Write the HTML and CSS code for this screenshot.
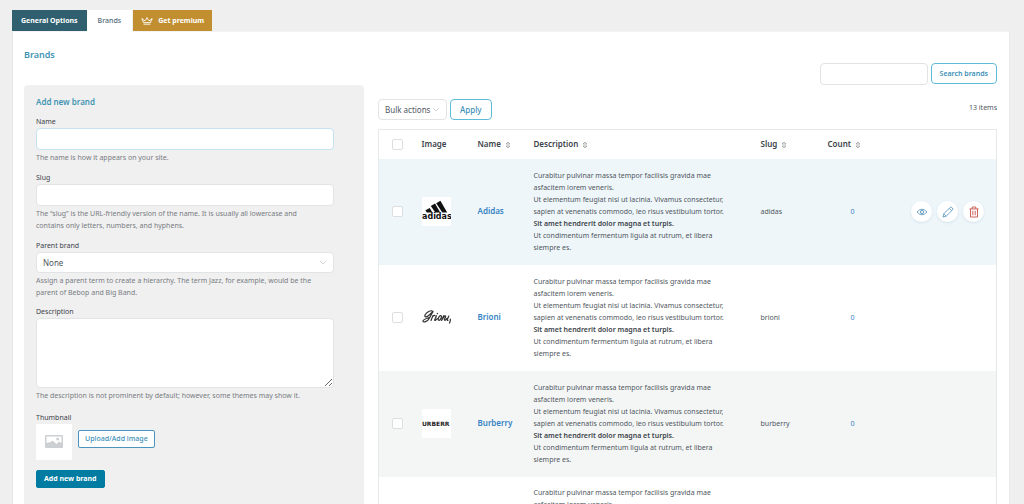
FILE: index.html
```html
<!DOCTYPE html>
<html lang="en">
<head>
<meta charset="utf-8">
<title>Brands</title>
<link rel="stylesheet" href="styles.css">
</head>
<body>
<svg class="sprite" aria-hidden="true">
  <symbol id="sort" viewBox="0 0 6 8"><path d="M1 3 3 1 5 3zM1 5 3 7 5 5z" fill="none" stroke="currentColor" stroke-width=".7"/></symbol>
</svg>
<nav class="tabs">
  <a class="tab tab-general" href="#general">General Options</a>
  <a class="tab tab-active" href="#brands">Brands</a>
  <a class="tab tab-premium" href="#premium">
    <svg class="crown" viewBox="0 0 12 8"><path d="M2.500 7.200h7M2.500 5.600 1.300 2.200 4 3.800 6 1.200l2 2.600 2.700-1.600-1.200 3.400z" fill="none" stroke="currentColor" stroke-width=".9" stroke-linejoin="round"/><circle cx="1.100" cy="1.900" r=".7" fill="currentColor"/><circle cx="10.900" cy="1.900" r=".7" fill="currentColor"/><circle cx="6" cy="1" r=".7" fill="currentColor"/></svg>
    Get premium</a>
</nav>
<main class="panel">
  <h1 class="title">Brands</h1>
  <form class="search">
    <input class="input search-input" type="search" aria-label="Search brands">
    <button class="btn btn-search" type="button">Search brands</button>
  </form>
  <div class="columns">
    <form class="card">
      <h2 class="card-title">Add new brand</h2>
      <div class="field">
        <label for="name">Name</label>
        <input class="input input-focus" id="name" type="text">
        <p class="help">The name is how it appears on your site.</p>
      </div>
      <div class="field">
        <label for="slug">Slug</label>
        <input class="input" id="slug" type="text">
        <p class="help">The “slug” is the URL-friendly version of the name. It is usually all lowercase and contains only letters, numbers, and hyphens.</p>
      </div>
      <div class="field">
        <label for="parent">Parent brand</label>
        <span class="select-wrap"><select class="input select" id="parent"><option>None</option></select><svg class="chevron" viewBox="0 0 8 5"><path d="m1 1 3 3 3-3" fill="none" stroke="currentColor" stroke-width=".8"/></svg></span>
        <p class="help">Assign a parent term to create a hierarchy. The term Jazz, for example, would be the parent of Bebop and Big Band.</p>
      </div>
      <div class="field desc-field">
        <label for="description">Description</label>
        <textarea class="input textarea" id="description"></textarea>
        <p class="help">The description is not prominent by default; however, some themes may show it.</p>
      </div>
      <div class="field thumb-field">
        <label for="upload">Thumbnail</label>
        <div class="thumb-row">
          <span class="thumb"><svg viewBox="0 0 18 14"><rect width="18" height="13" rx="1" fill="#ccd0d3"/><path d="M1.500 1.500h15v6.500L14 6.500 11.500 9 7.500 5.500 5.500 7 1.500 8z" fill="#fff"/><circle cx="12.700" cy="4" r="1.500" fill="#ccd0d3"/></svg></span>
          <button class="btn btn-upload" id="upload" type="button">Upload/Add image</button>
        </div>
      </div>
      <button class="btn btn-primary" type="button">Add new brand</button>
    </form>
    <section class="listing">
      <div class="toolbar">
        <span class="select-wrap"><select class="input select bulk" aria-label="Bulk actions"><option>Bulk actions</option></select><svg class="chevron" viewBox="0 0 8 5"><path d="m1 1 3 3 3-3" fill="none" stroke="currentColor" stroke-width=".8"/></svg></span>
        <button class="btn btn-apply" type="button">Apply</button>
        <span class="count">13 items</span>
      </div>
      <table class="table">
        <colgroup><col class="c-check"><col class="c-img"><col class="c-name"><col class="c-desc"><col class="c-slug"><col class="c-count"><col></colgroup>
        <thead>
          <tr>
            <th class="check"><input type="checkbox" aria-label="Select all"></th>
            <th>Image</th>
            <th>Name <svg class="sort"><use href="#sort"/></svg></th>
            <th>Description <svg class="sort"><use href="#sort"/></svg></th>
            <th>Slug <svg class="sort"><use href="#sort"/></svg></th>
            <th>Count <svg class="sort"><use href="#sort"/></svg></th>
            <th></th>
          </tr>
        </thead>
        <tbody>
          <tr class="hovered">
            <td class="check"><input type="checkbox" aria-label="Select Adidas"></td>
            <td><svg class="logo" viewBox="0 0 29 29"><rect width="29" height="29" fill="#fff"/><g fill="#111"><path d="m3.500 13.300 4.200-2.400 2.700 4.600H4.700z"/><path d="m8.800 9 4.200-2.400 5.200 8.900h-4.900z"/><path d="m14.200 6.200 4.200-2.400 6.800 11.700h-4.900z"/></g><text x="0" y="22" class="logo-adidas">adidas</text></svg></td>
            <td><a class="name" href="#adidas">Adidas</a></td>
            <td class="desc">Curabitur pulvinar massa tempor facilisis gravida mae asfacitem lorem veneris.<br>Ut elementum feugiat nisi ut lacinia. Vivamus consectetur, sapien at venenatis commodo, leo risus vestibulum tortor.<br><strong>Sit amet hendrerit dolor magna et turpis.</strong><br>Ut condimentum fermentum ligula at rutrum, et libera siempre es.</td>
            <td>adidas</td>
            <td class="num"><a href="#c1">0</a></td>
            <td><div class="actions">
              <button class="round" type="button" aria-label="View"><svg viewBox="0 0 12 12"><path d="M1 6q5-5.600 10 0-5 5.600-10 0z" fill="none" stroke="currentColor" stroke-width=".8"/><circle cx="6" cy="6" r="1.600" fill="none" stroke="currentColor" stroke-width=".9"/></svg></button>
              <button class="round" type="button" aria-label="Edit"><svg viewBox="0 0 12 12"><path d="m1 11 .8-3.200 6.300-6.300q.8-.8 1.700 0l.7.7q.8.800 0 1.700l-6.300 6.300zM7.300 2.400l2.300 2.300M1.900 7.800l2.300 2.300" fill="none" stroke="currentColor" stroke-width=".8" stroke-linejoin="round"/></svg></button>
              <button class="round danger" type="button" aria-label="Delete"><svg viewBox="0 0 12 12"><path d="M1.500 2.900h9M4.200 2.700V1h3.600v1.700M2.500 3v8h7V3" fill="none" stroke="currentColor" stroke-width=".9"/><path d="M4.500 4.800v4.500M6 4.800v4.500M7.500 4.800v4.500" stroke="currentColor" stroke-width=".6"/></svg></button>
            </div></td>
          </tr>
          <tr>
            <td class="check"><input type="checkbox" aria-label="Select Brioni"></td>
            <td><svg class="logo" viewBox="0 0 29 29"><rect width="29" height="29" fill="#fff"/><g fill="none" stroke="#333" stroke-linecap="round" stroke-linejoin="round"><path d="M11 9C10 6 4.500 9 3 12c-1 2.500 2 2.200 4 .3L11 8.500 7.500 15C5.500 19 1.200 19.500.9 18.200.7 16.500 4 15.500 7.500 14.500" stroke-width="1.200"/><path d="m11 12.500-2 5M10.300 14q2-2.500 2.700-1.200M14.500 12.700l-1.700 3.800q-.4 1.500.9.700l1.500-1.500M15.300 10.500l.2-.2M19 12.700c-1.800-.5-3.700 3.900-2.300 4.600 1.500.5 3.800-4.100 2.300-4.600M21.700 12.700l-2.200 4.800q3.500-5.600 4.100-4.500.3.600-1.100 3.200-.5 1.700 1.100.7l1.300-1.500M26.800 13l-1.500 3.500q-.3 1.300.7.800M28.300 16q.3 1.800-.8 4" stroke-width="1.200"/></g></svg></td>
            <td><a class="name" href="#brioni">Brioni</a></td>
            <td class="desc">Curabitur pulvinar massa tempor facilisis gravida mae asfacitem lorem veneris.<br>Ut elementum feugiat nisi ut lacinia. Vivamus consectetur, sapien at venenatis commodo, leo risus vestibulum tortor.<br><strong>Sit amet hendrerit dolor magna et turpis.</strong><br>Ut condimentum fermentum ligula at rutrum, et libera siempre es.</td>
            <td>brioni</td>
            <td class="num"><a href="#c2">0</a></td>
            <td></td>
          </tr>
          <tr class="striped">
            <td class="check"><input type="checkbox" aria-label="Select Burberry"></td>
            <td><svg class="logo" viewBox="0 0 29 29"><rect width="29" height="29" fill="#fff"/><text x="0" y="17" class="logo-burberry">URBERR</text></svg></td>
            <td><a class="name" href="#burberry">Burberry</a></td>
            <td class="desc">Curabitur pulvinar massa tempor facilisis gravida mae asfacitem lorem veneris.<br>Ut elementum feugiat nisi ut lacinia. Vivamus consectetur, sapien at venenatis commodo, leo risus vestibulum tortor.<br><strong>Sit amet hendrerit dolor magna et turpis.</strong><br>Ut condimentum fermentum ligula at rutrum, et libera siempre es.</td>
            <td>burberry</td>
            <td class="num"><a href="#c3">0</a></td>
            <td></td>
          </tr>
          <tr class="next">
            <td></td><td></td><td></td>
            <td class="desc">Curabitur pulvinar massa tempor facilisis gravida mae asfacitem lorem veneris.</td>
            <td></td><td></td><td></td>
          </tr>
        </tbody>
      </table>
    </section>
  </div>
</main>
</body>
</html>
```
FILE: styles.css
```css
* { box-sizing: border-box; }
html { height: 100%; overflow: hidden; }
body {
  margin: 0;
  height: 100%;
  overflow: hidden;
  padding: 10px 14px 0 12px;
  background: #efefef;
  color: #50575e;
  font: 7px/12px "Noto Sans", "Open Sans", sans-serif;
}
h1, h2, p { margin: 0; }
a { color: #3582c4; text-decoration: none; }
button, input, select, textarea { font: inherit; color: inherit; margin: 0; }
.sprite { position: absolute; width: 0; height: 0; }

.tabs { display: flex; }
.tab {
  display: flex;
  align-items: center;
  height: 21px;
  padding: 0 9px;
  font-size: 7px;
  font-weight: 700;
  color: #fff;
}
.tab-general { background: #30606f; }
.tab-active { background: #fff; color: #50697a; font-weight: 500; height: 22px; margin-bottom: -1px; padding: 0 11px; }
.tab-premium { background: #c18f30; gap: 5px; padding: 0 8px; margin-left: 1px; }
.crown { width: 12px; height: 8px; }

.panel {
  display: flow-root;
  background: #fff;
  border: 1px solid #e8e8e8;
  border-top-color: #f3f3f3;
  padding: 16px 12px 0 11px;
  min-height: 100%;
}
.title { font-size: 9px; line-height: 14px; font-weight: 600; color: #3f94b3; }
.search { display: flex; justify-content: flex-end; gap: 3px; margin-top: 1px; }
.columns { display: grid; grid-template-columns: 340fr 619fr; gap: 14px; align-items: start; }

.input {
  display: block;
  width: 100%;
  height: 22px;
  padding: 0 6px;
  background: #fff;
  border: 1px solid #e1e3e5;
  border-radius: 4px;
  outline: 0;
  appearance: none;
}
.input-focus { border-color: #c3e3ef; }
.search-input { width: 108px; }
.btn {
  height: 21px;
  padding: 0 8px;
  background: #fff;
  border: 1px solid #5fbcd6;
  border-radius: 4px;
  color: #3a8fb7;
  font-weight: 600;
  white-space: nowrap;
}

.card { background: #f0f0f0; border-radius: 4px 4px 0 0; padding: 10px 30px 30px 12px; min-height: 500px; }
.card-title { font-size: 8px; line-height: 14px; font-weight: 600; color: #3f94b3; margin-bottom: 7px; }
.field { margin-bottom: 8px; }
.field label { display: block; color: #3c434a; }
.help { margin-top: 2px; padding-right: 12px; color: #787c82; }
.select-wrap { position: relative; display: block; }
.select { height: 21px; font-size: 8px; }
.chevron { position: absolute; right: 7px; top: 8px; width: 8px; height: 5px; color: #c5c8cb; pointer-events: none; }
.textarea { height: 70px; resize: vertical; }
.desc-field { margin-top: -1px; margin-bottom: 10px; }
.thumb-field { margin-bottom: 10px; }
.thumb-row { display: flex; gap: 6px; }
.thumb { display: grid; place-items: center; width: 36px; height: 36px; background: #fff; }
.thumb svg { width: 18px; height: 14px; }
.btn-upload { height: 18px; margin-top: 6px; padding: 0 6px; border-color: #4a94bd; border-radius: 2px; font-weight: 500; }
.btn-primary { height: 18px; background: #007ba1; border-color: #007ba1; border-radius: 2px; color: #fff; font-weight: 700; padding: 0 7px; }

.toolbar { display: flex; gap: 3px; margin-top: 14px; margin-bottom: 9px; }
.bulk { width: 69px; }
.toolbar .btn { padding: 0 9px; font-weight: 500; font-size: 8px; }
.count { margin-left: auto; line-height: 18px; }

.table { width: 100%; table-layout: fixed; border-collapse: collapse; border: 1px solid #e6e8ea; }
.c-check { width: 43px; }
.c-img, .c-name { width: 56px; }
.c-desc { width: 227px; }
.c-slug { width: 67px; }
.c-count { width: 70px; }
th { height: 29px; padding: 0; text-align: left; font-weight: 600; color: #3c434a; font-size: 8px; white-space: nowrap; }
td { height: 106px; padding: 0; }
.check { padding-left: 13px; }
.check input {
  display: block;
  appearance: none;
  width: 11px;
  height: 11px;
  background: #fff;
  border: 1px solid #dcdee0;
  border-radius: 2px;
}
.sort { width: 6px; height: 8px; margin-left: 2px; vertical-align: middle; color: #8d9399; }
.hovered { background: #eef6fa; }
.striped { background: #f4f6f6; }
.next td { vertical-align: top; padding-top: 10px; }
.desc { padding-right: 28px; }
.desc strong { font-weight: 600; color: #3c434a; }
.name { font-size: 8px; font-weight: 600; }
.num { padding-left: 23px; }
.logo { display: block; width: 29px; height: 29px; }
.logo-adidas { font: 700 8px "DejaVu Sans", sans-serif; fill: #111; }
.logo-burberry { font: 700 6px "DejaVu Sans", sans-serif; fill: #222; }
.actions { display: flex; justify-content: flex-end; gap: 5px; padding-right: 12px; }
.round {
  display: grid;
  place-items: center;
  width: 21px;
  height: 21px;
  padding: 0;
  border: 0;
  border-radius: 50%;
  background: #fff;
  box-shadow: 0 1px 3px #d5e3ea;
  color: #4d8fb8;
}
.round svg { width: 12px; height: 12px; }
.danger { color: #c75148; }
```
